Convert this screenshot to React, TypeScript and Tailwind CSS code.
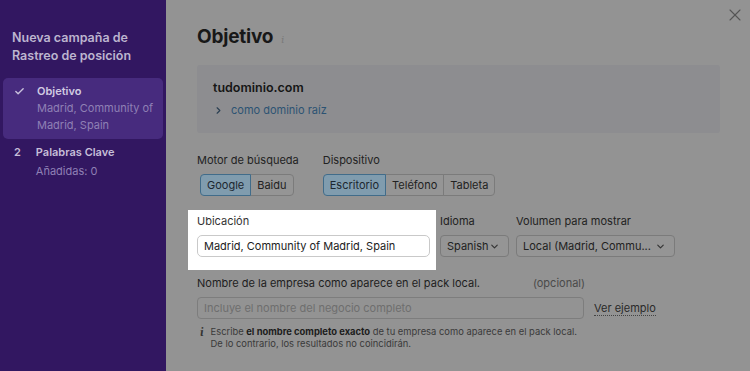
import { Check, ChevronDown, ChevronRight, X } from "lucide-react"

const Segmented = ({ items, active }: { items: string[]; active: number }) => (
  <div className="flex h-[22px]">
    {items.map((it, i) => (
      <div
        key={it}
        className={`flex items-center px-[6px] text-[11px] border ${
          i === active
            ? "bg-[#809cae] border-[#416c8a] text-[#1c2730] z-10"
            : "bg-[#959595] border-[#7b7b7b] text-[#222]"
        } ${i === 0 ? "rounded-l-[4px]" : "-ml-px"} ${i === items.length - 1 ? "rounded-r-[4px]" : ""}`}
      >
        {it}
      </div>
    ))}
  </div>
)

const SelectBox = ({ value, w }: { value: string; w: string }) => (
  <div className={`flex items-center justify-between h-[22px] pl-[6px] pr-[8px] border border-[#7b7b7b] rounded-[4px] bg-[#959595] text-[11px] text-[#222] ${w}`}>
    <span className="whitespace-nowrap">{value}</span>
    <ChevronDown size={11} strokeWidth={2.5} className="text-[#333] shrink-0" />
  </div>
)

export default function App() {
  return (
    <div className="flex w-[750px] h-[371px] overflow-hidden font-['Inter',sans-serif] bg-[#939393]">
      {/* sidebar */}
      <aside className="w-[166px] shrink-0 bg-[#321761] px-[3px] pt-[29px]">
        <h2 className="px-[9px] text-[12.5px] leading-[18px] font-semibold text-[#bdb5cf]">
          Nueva campaña de Rastreo de posición
        </h2>
        <div className="mt-[13px] rounded-[5px] bg-[#472b7e] pl-[11px] pr-2 pt-[5px] pb-[5px] flex gap-[12px]">
          <Check size={11} strokeWidth={3} className="mt-[3px] text-[#c9c1dc] shrink-0" />
          <div>
            <div className="text-[11px] font-semibold leading-[17px] text-[#d2cbe2]">Objetivo</div>
            <div className="text-[11px] leading-[17px] text-[#8f80b5]">Madrid, Community of Madrid, Spain</div>
          </div>
        </div>
        <div className="mt-[5px] pl-[11px] flex gap-[15px]">
          <span className="text-[11px] font-semibold leading-[17px] text-[#c6bed8]">2</span>
          <div>
            <div className="text-[11px] font-semibold leading-[17px] text-[#c6bed8]">Palabras Clave</div>
            <div className="mt-[2px] text-[11px] leading-[17px] text-[#8f80b5]">Añadidas: 0</div>
          </div>
        </div>
      </aside>

      {/* main */}
      <main className="flex-1 relative pl-[31px] pr-[30px] pt-[24px] text-[#1e1e1e]">
        <X size={20} strokeWidth={1.3} className="absolute right-[5px] top-[5px] text-[#555]" />
        <div className="flex items-baseline gap-[8px]">
          <h1 className="text-[19px] font-bold leading-[26px] tracking-[-0.2px] text-[#181818]">Objetivo</h1>
          <span className="text-[11px] italic text-[#7a7a7a] font-serif">i</span>
        </div>

        <div className="mt-[15px] bg-[#8d8d90] rounded-[3px] pl-[16px] pt-[14px] h-[68px]">
          <div className="text-[12.5px] font-semibold text-[#151515] leading-[17px]">tudominio.com</div>
          <div className="mt-[6px] flex items-center gap-[7px] text-[11px] text-[#2c5373]">
            <ChevronRight size={11} strokeWidth={2.5} className="text-[#2a3f52]" />
            <span>como dominio raíz</span>
          </div>
        </div>

        <div className="mt-[19px] flex gap-[24px]">
          <div>
            <div className="text-[11px] leading-[16px] text-[#222]">Motor de búsqueda</div>
            <div className="mt-[6px] ml-[3px]">
              <Segmented items={["Google", "Baidu"]} active={0} />
            </div>
          </div>
          <div>
            <div className="text-[11px] leading-[16px] text-[#222]">Dispositivo</div>
            <div className="mt-[6px]">
              <Segmented items={["Escritorio", "Teléfono", "Tableta"]} active={0} />
            </div>
          </div>
        </div>

        <div className="mt-[14px] flex items-start">
          <div className="-ml-[9px] bg-white pl-[9px] pr-[6px] pt-[3px] pb-[13px] w-[248px]">
            <div className="text-[11px] leading-[16px] text-[#333]">Ubicación</div>
            <div className="mt-[6px] h-[22px] flex items-center px-[6px] border border-[#c9c9c9] rounded-[5px] text-[11px] text-[#222]">
              Madrid, Community of Madrid, Spain
            </div>
          </div>
          <div className="ml-[4px] pt-[3px]">
            <div className="text-[11px] leading-[16px] text-[#222]">Idioma</div>
            <div className="mt-[6px]">
              <SelectBox value="Spanish" w="w-[69px]" />
            </div>
          </div>
          <div className="ml-[7px] pt-[3px]">
            <div className="text-[11px] leading-[16px] text-[#222]">Volumen para mostrar</div>
            <div className="mt-[6px]">
              <SelectBox value="Local (Madrid, Commu..." w="w-[159px]" />
            </div>
          </div>
        </div>

        <div className="mt-[5px] flex w-[388px] justify-between text-[11px] leading-[16px]">
          <span className="text-[#1e1e1e]">Nombre de la empresa como aparece en el pack local.</span>
          <span className="text-[#4a4a4a]">(opcional)</span>
        </div>
        <div className="mt-[6px] flex items-center gap-[10px]">
          <div className="w-[387px] h-[22px] flex items-center px-[6px] border border-[#7d7d7d] rounded-[4px] text-[11px] text-[#6e6e6e]">
            Incluye el nombre del negocio completo
          </div>
          <span className="text-[11px] text-[#2a2a2a] border-b border-dotted border-[#444] leading-[14px]">Ver ejemplo</span>
        </div>
        <div className="mt-[7px] flex gap-[7px] pl-[3px] text-[9.4px] leading-[12px] text-[#3a3a3a]">
          <span className="font-serif italic font-bold text-[12px] leading-[12px] text-[#333]">i</span>
          <div>
            <div>
              Escribe <b className="text-[#1c1c1c]">el nombre completo exacto</b> de tu empresa como aparece en el pack local.
            </div>
            <div>De lo contrario, los resultados no coincidirán.</div>
          </div>
        </div>
      </main>
    </div>
  )
}
